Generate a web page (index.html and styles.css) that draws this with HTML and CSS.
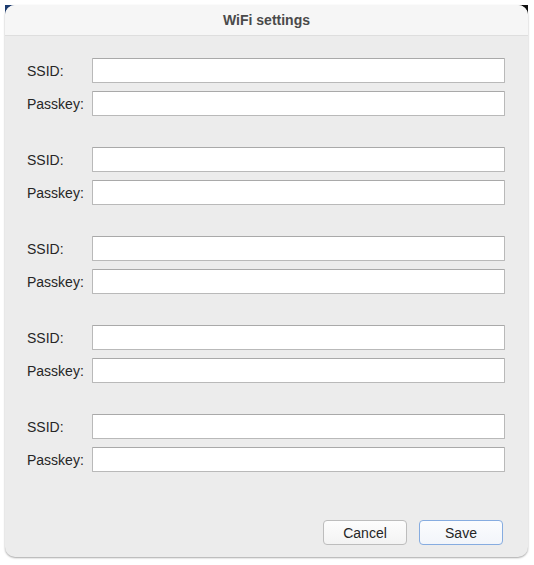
FILE: index.html
```html
<!DOCTYPE html>
<html>
<head>
<meta charset="utf-8">
<link rel="stylesheet" href="styles.css">
</head>
<body>
<div class="desk-corner left"></div>
<div class="desk-corner right"></div>
<div class="window">
  <div class="titlebar">WiFi settings</div>
  <div class="content">
    <div class="groups">
      <div class="group">
        <label class="label">SSID:</label><input class="field" type="text">
        <label class="label">Passkey:</label><input class="field" type="text">
      </div>
      <div class="group">
        <label class="label">SSID:</label><input class="field" type="text">
        <label class="label">Passkey:</label><input class="field" type="text">
      </div>
      <div class="group">
        <label class="label">SSID:</label><input class="field" type="text">
        <label class="label">Passkey:</label><input class="field" type="text">
      </div>
      <div class="group">
        <label class="label">SSID:</label><input class="field" type="text">
        <label class="label">Passkey:</label><input class="field" type="text">
      </div>
      <div class="group">
        <label class="label">SSID:</label><input class="field" type="text">
        <label class="label">Passkey:</label><input class="field" type="text">
      </div>
    </div>
    <div class="buttons">
      <button class="btn">Cancel</button>
      <button class="btn primary">Save</button>
    </div>
  </div>
</div>
</body>
</html>
```
FILE: styles.css
```css
html, body {
  margin: 0;
  padding: 0;
  background: #ffffff;
}
body {
  position: relative;
  width: 534px;
  height: 565px;
  overflow: hidden;
  font-family: "Liberation Sans", Arial, sans-serif;
}
.desk-corner {
  position: absolute;
  top: 5px;
  width: 12px;
  height: 12px;
}
.desk-corner.left {
  left: 5px;
  background: #1d3d70;
}
.desk-corner.right {
  left: 516px;
  background: #111111;
}
.window {
  position: relative;
  margin: 5px 0 0 5px;
  width: 523px;
  height: 552px;
  border-radius: 10px;
  background: #ececec;
  overflow: hidden;
  display: flex;
  flex-direction: column;
  box-shadow: 0 1px 2px rgba(0, 0, 0, 0.35);
}
.titlebar {
  height: 30px;
  flex: none;
  background: #f6f6f6;
  border-bottom: 1px solid #dedede;
  display: flex;
  align-items: center;
  justify-content: center;
  font-size: 14px;
  font-weight: bold;
  color: #4a4a4a;
}
.content {
  flex: 1;
  display: flex;
  flex-direction: column;
  padding: 22px 23px 12px 22px;
}
.groups {
  display: flex;
  flex-direction: column;
  gap: 31px;
}
.group {
  display: grid;
  grid-template-columns: 65px 413px;
  grid-auto-rows: 25px;
  row-gap: 8px;
  align-items: center;
}
.label {
  font-size: 14px;
  color: #262626;
}
.field {
  box-sizing: border-box;
  height: 25px;
  width: 413px;
  margin: 0;
  border: 1px solid #b9b9b9;
  border-top-color: #a9a9a9;
  border-radius: 1px;
  background: #ffffff;
  font-family: inherit;
  font-size: 14px;
}
.buttons {
  margin-top: auto;
  display: flex;
  justify-content: flex-end;
  gap: 12px;
  padding-right: 2px;
}
.btn {
  box-sizing: border-box;
  width: 84px;
  height: 25px;
  margin: 0;
  border: 1px solid #bdbdbd;
  border-radius: 4px;
  background: linear-gradient(#fdfdfd, #f3f3f3);
  font-family: inherit;
  font-size: 14px;
  color: #262626;
  padding: 0;
}
.btn.primary {
  border-color: #86ace0;
  background: linear-gradient(#fbfcfe, #f2f5fa);
}
```
